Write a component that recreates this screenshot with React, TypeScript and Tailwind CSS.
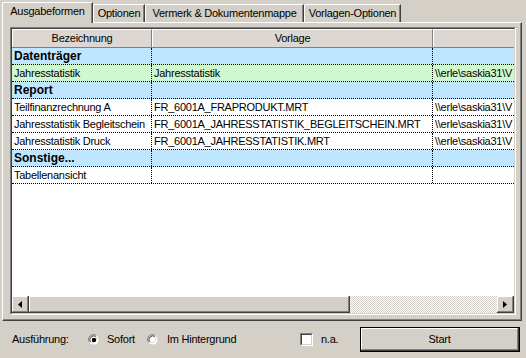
import React from "react"

type Row = { kind: "group" | "sel" | "item"; name: string; vorlage?: string; pfad?: string }

const PFAD = "\\\\erle\\saskia31\\V"

const rows: Row[] = [
  { kind: "group", name: "Datenträger" },
  { kind: "sel", name: "Jahresstatistik", vorlage: "Jahresstatistik", pfad: PFAD },
  { kind: "group", name: "Report" },
  { kind: "item", name: "Teilfinanzrechnung A", vorlage: "FR_6001A_FRAPRODUKT.MRT", pfad: PFAD },
  { kind: "item", name: "Jahresstatistik Begleitschein", vorlage: "FR_6001A_JAHRESSTATISTIK_BEGLEITSCHEIN.MRT", pfad: PFAD },
  { kind: "item", name: "Jahresstatistik Druck", vorlage: "FR_6001A_JAHRESSTATISTIK.MRT", pfad: PFAD },
  { kind: "group", name: "Sonstige..." },
  { kind: "item", name: "Tabellenansicht" },
]

const tabs = [
  { label: "Ausgabeformen", w: "w-[91px]" },
  { label: "Optionen", w: "w-[52px]" },
  { label: "Vermerk & Dokumentenmappe", w: "w-[159px]" },
  { label: "Vorlagen-Optionen", w: "w-[97px]" },
]

function Raised({ className = "", children }: { className?: string; children?: React.ReactNode }) {
  // classic 3d button edge
  return (
    <div className={`border-r border-b border-[#404040] ${className}`}>
      <div className="w-full h-full border-t border-l border-t-white border-l-white border-r border-b border-r-[#808080] border-b-[#808080] flex items-center justify-center">
        {children}
      </div>
    </div>
  )
}

function Radio({ checked }: { checked?: boolean }) {
  return (
    <svg width="12" height="12" viewBox="0 0 12 12" className="shrink-0">
      <path d="M1.5 8.5 A5 5 0 0 1 8.5 1.5" fill="none" stroke="#808080" />
      <path d="M8.5 1.5 A5 5 0 0 1 1.5 8.5" fill="none" stroke="#ffffff" />
      <circle cx="6" cy="6" r="4.5" fill="#fff" />
      <path d="M2.5 8 A4 4 0 0 1 8 2.5" fill="none" stroke="#404040" />
      <path d="M8 2.5 A4 4 0 0 1 2.5 8" fill="none" stroke="#d4d0c8" />
      {checked && <rect x="4" y="4" width="4" height="4" rx="1.2" fill="#000" />}
    </svg>
  )
}

function Cell({ w, children, bold, last }: { w?: string; children?: React.ReactNode; bold?: boolean; last?: boolean }) {
  return (
    <div className={`${w ?? "flex-1"} h-full flex items-center pl-[2px] overflow-hidden whitespace-nowrap ${last ? "" : "border-r border-dotted border-black"} ${bold ? "font-bold text-[12px] tracking-normal" : ""}`}>
      {children}
    </div>
  )
}

export default function App() {
  return (
    <div className="w-[526px] h-[358px] bg-[#d4d0c8] overflow-hidden font-['Liberation_Sans',Arial,sans-serif] text-[11px] tracking-[-0.25px] leading-none text-black select-none">
      {/* tab strip */}
      <div className="h-[22px] pt-[2px] pl-[2px] flex items-end relative z-10">
        {tabs.map((t, i) =>
          i === 0 ? (
            <div key={t.label} className={`${t.w} h-[21px] -mb-px bg-[#d4d0c8] border-t border-l border-white rounded-tl-[2px] border-r border-r-[#404040] shadow-[inset_-1px_0_0_#808080] flex items-center justify-center pb-[3px]`}>
              {t.label}
            </div>
          ) : (
            <div key={t.label} className={`${t.w} h-[18px] border-t border-l border-white rounded-tl-[2px] border-r border-r-[#404040] shadow-[inset_-1px_0_0_#808080] flex items-center justify-center pb-px`}>
              {t.label}
            </div>
          )
        )}
      </div>

      {/* panel */}
      <div className="ml-[2px] w-[520px] h-[299px] border-t border-l border-white border-r border-b border-r-[#404040] border-b-[#404040] shadow-[inset_-1px_-1px_0_#808080] pt-[4px] pl-[7px]">
        <div className="w-[506px] h-[288px] border-t border-l border-[#808080] border-r border-b border-r-white border-b-white">
          <div className="w-full h-full border-t border-l border-[#404040] border-r border-b border-r-[#d4d0c8] border-b-[#d4d0c8] bg-white flex flex-col">
            {/* header */}
            <div className="h-[19px] flex shrink-0 bg-[#dcd7d3] border-b border-[#808080]">
              <div className="w-[140px] h-full border-l border-t border-white border-r border-r-[#808080] flex items-center justify-center">Bezeichnung</div>
              <div className="w-[281px] h-full border-l border-t border-white border-r border-r-[#808080] flex items-center justify-center">Vorlage</div>
              <div className="flex-1 h-full border-l border-t border-white" />
            </div>
            {rows.map((r, i) => {
              const bg = r.kind === "group" ? "bg-[#bfe6ff]" : r.kind === "sel" ? "bg-[#d0f8d0] border-t border-dotted border-black -mt-px h-[18px]" : "bg-white h-[17px]"
              return (
                <div key={i} className={`shrink-0 flex border-b border-dotted border-black h-[17px] ${bg}`}>
                  <Cell w="w-[140px]" bold={r.kind === "group"}>{r.name}</Cell>
                  <Cell w="w-[281px]">{r.vorlage}</Cell>
                  <Cell last>{r.pfad}</Cell>
                </div>
              )
            })}
            <div className="flex-1" />
            {/* horizontal scrollbar */}
            <div className="h-[17px] shrink-0 flex">
              <Raised className="w-[17px] h-full bg-[#d4d0c8]">
                <svg width="4" height="7" viewBox="0 0 4 7"><path d="M4 0 L0 3.5 L4 7 Z" fill="#000" /></svg>
              </Raised>
              <Raised className="w-[321px] h-full bg-[#d4d0c8]" />
              <div className="flex-1 h-full bg-[repeating-conic-gradient(#ffffff_0%_25%,#d4d0c8_0%_50%)] bg-[length:2px_2px]" />
              <Raised className="w-[17px] h-full bg-[#d4d0c8]">
                <svg width="4" height="7" viewBox="0 0 4 7"><path d="M0 0 L4 3.5 L0 7 Z" fill="#000" /></svg>
              </Raised>
            </div>
          </div>
        </div>
      </div>

      {/* bottom bar */}
      <div className="h-[37px] flex items-center pl-[12px]">
        <span className="w-[76px]">Ausführung:</span>
        <Radio checked />
        <span className="ml-[7px] w-[40px]">Sofort</span>
        <Radio />
        <span className="ml-[8px] w-[133px]">Im Hintergrund</span>
        <div className="w-[13px] h-[13px] shrink-0 border-t border-l border-[#808080] border-r border-b border-r-white border-b-white">
          <div className="w-full h-full bg-white border-t border-l border-[#404040] border-r border-b border-r-[#d4d0c8] border-b-[#d4d0c8]" />
        </div>
        <span className="ml-[8px] w-[39px]">n.a.</span>
        <div className="w-[160px] h-[25px] border border-black">
          <Raised className="w-full h-full">Start</Raised>
        </div>
      </div>
    </div>
  )
}
